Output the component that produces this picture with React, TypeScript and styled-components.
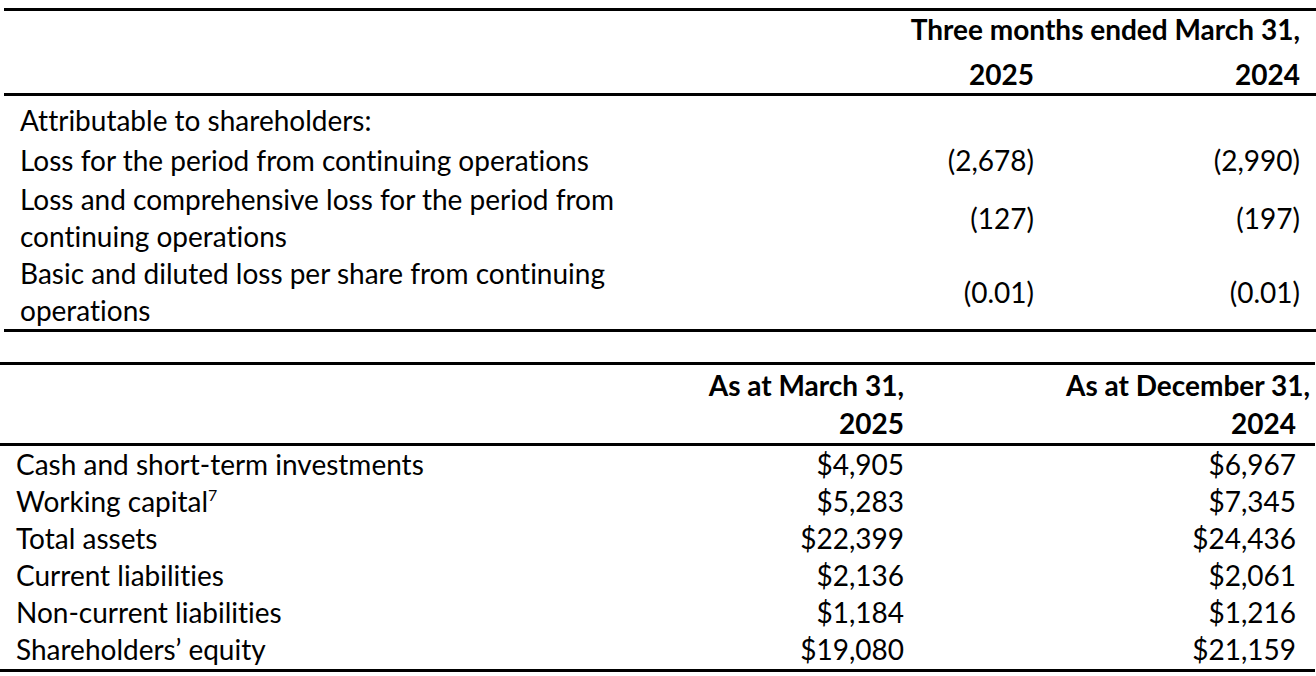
import React from 'react';
import styled, { createGlobalStyle } from 'styled-components';

const GlobalStyle = createGlobalStyle`
  html, body {
    margin: 0;
    padding: 0;
    background: #fff;
  }
  body {
    font-family: Lato, 'Open Sans', sans-serif;
    font-size: 28px;
    color: #000;
    font-variant-ligatures: none;
    font-feature-settings: 'liga' 0, 'clig' 0;
  }
`;

interface IResultRow {
  label: string[];
  current: string;
  prior: string;
  pad: number;
}

const results: IResultRow[] = [
  { label: ['Attributable to shareholders:'], current: '', prior: '', pad: 6 },
  {
    label: ['Loss for the period from continuing operations'],
    current: '(2,678)',
    prior: '(2,990)',
    pad: 3,
  },
  {
    label: [
      'Loss and comprehensive loss for the period from',
      'continuing operations',
    ],
    current: '(127)',
    prior: '(197)',
    pad: 2,
  },
  {
    label: ['Basic and diluted loss per share from continuing', 'operations'],
    current: '(0.01)',
    prior: '(0.01)',
    pad: 0,
  },
];

interface IPositionRow {
  label: string;
  note?: string;
  current: string;
  prior: string;
}

const positions: IPositionRow[] = [
  { label: 'Cash and short-term investments', current: '$4,905', prior: '$6,967' },
  { label: 'Working capital', note: '7', current: '$5,283', prior: '$7,345' },
  { label: 'Total assets', current: '$22,399', prior: '$24,436' },
  { label: 'Current liabilities', current: '$2,136', prior: '$2,061' },
  { label: 'Non-current liabilities', current: '$1,184', prior: '$1,216' },
  { label: 'Shareholders’ equity', current: '$19,080', prior: '$21,159' },
];

export default function App(): JSX.Element {
  return (
    <Page>
      <GlobalStyle />
      <ResultsTable>
        <ResultsHead>
          <Empty />
          <PeriodTitle>Three months ended March 31,</PeriodTitle>
          <Empty />
          <YearCell>2025</YearCell>
          <YearCell>2024</YearCell>
        </ResultsHead>
        <ResultsBody>
          {results.map(row => (
            <React.Fragment key={row.label[0]}>
              <LabelCell $pad={row.pad}>
                {row.label.map(line => (
                  <Line key={line}>{line}</Line>
                ))}
              </LabelCell>
              <NumberCell $pad={row.pad}>{row.current}</NumberCell>
              <NumberCell $pad={row.pad}>{row.prior}</NumberCell>
            </React.Fragment>
          ))}
        </ResultsBody>
      </ResultsTable>

      <PositionTable>
        <PositionHead>
          <Empty />
          <HeadStack>
            <Line>As at March 31,</Line>
            <Line>2025</Line>
          </HeadStack>
          <HeadStack>
            <Line $overhang={14}>As at December 31,</Line>
            <Line>2024</Line>
          </HeadStack>
        </PositionHead>
        <PositionBody>
          {positions.map(row => (
            <React.Fragment key={row.label}>
              <PlainLabel>
                {row.label}
                {row.note && <Note>{row.note}</Note>}
              </PlainLabel>
              <Amount>{row.current}</Amount>
              <Amount>{row.prior}</Amount>
            </React.Fragment>
          ))}
        </PositionBody>
      </PositionTable>
    </Page>
  );
}

const Page = styled.div`
  width: 1316px;
  padding-top: 8px;
  display: flex;
  flex-direction: column;
  gap: 30px;
  overflow: hidden;
`;

const ResultsTable = styled.section`
  margin-left: 4px;
  border-top: 3px solid #000;
  border-bottom: 3px solid #000;
`;

const ResultsHead = styled.div`
  display: grid;
  grid-template-columns: 1fr 260px 266px;
  grid-template-rows: 37px 45px;
  align-items: end;
  padding-right: 16px;
  border-bottom: 3px solid #000;
  font-weight: 700;
  line-height: 37px;
`;

const Empty = styled.div``;

const PeriodTitle = styled.div`
  grid-column: 2 / span 2;
  text-align: right;
  white-space: nowrap;
`;

const YearCell = styled.div`
  text-align: right;
`;

const ResultsBody = styled.div`
  display: grid;
  grid-template-columns: 1fr 260px 266px;
  padding: 0 16px;
  line-height: 37px;
`;

const LabelCell = styled.div<{ $pad: number }>`
  padding-top: ${p => p.$pad}px;
`;

const NumberCell = styled.div<{ $pad: number }>`
  padding-top: ${p => p.$pad}px;
  display: flex;
  align-items: center;
  justify-content: flex-end;
`;

const Line = styled.div<{ $overhang?: number }>`
  white-space: nowrap;
  margin-right: ${p => (p.$overhang ? -p.$overhang : 0)}px;
`;

const PositionTable = styled.section`
  margin-right: 1px;
  border-top: 3px solid #000;
  border-bottom: 3px solid #000;
`;

const PositionHead = styled.div`
  display: grid;
  grid-template-columns: 1fr 260px 392px;
  padding: 1px 19px 1px 0;
  border-bottom: 3px solid #000;
  font-weight: 700;
  line-height: 38px;
`;

const HeadStack = styled.div`
  text-align: right;
`;

const PositionBody = styled.div`
  display: grid;
  grid-template-columns: 1fr 260px 392px;
  padding: 0 19px 1px 16px;
  line-height: 37px;
`;

const PlainLabel = styled.div`
  white-space: nowrap;
`;

const Note = styled.sup`
  font-size: 16px;
  line-height: 0;
  vertical-align: 11px;
`;

const Amount = styled.div`
  text-align: right;
`;
